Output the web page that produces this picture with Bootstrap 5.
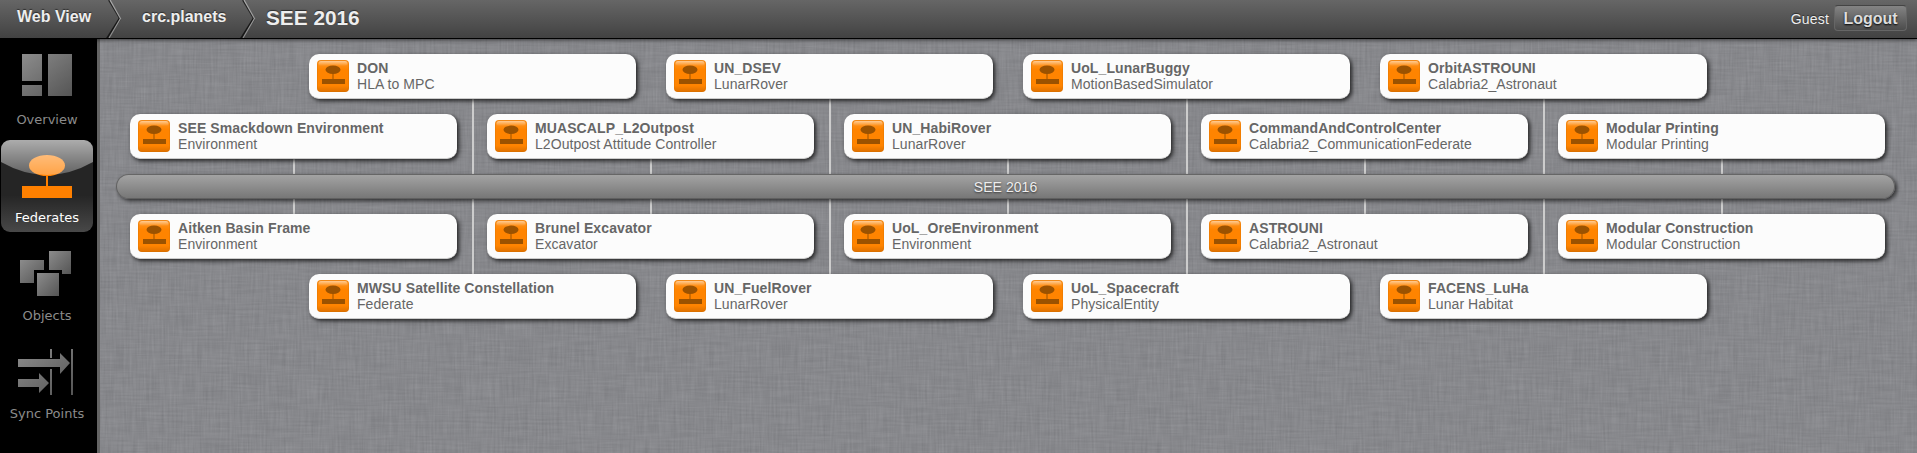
<!DOCTYPE html>
<html lang="en">
<head>
<meta charset="utf-8">
<title>SEE 2016 - Web View</title>
<link href="https://cdn.jsdelivr.net/npm/bootstrap@5.3.0/dist/css/bootstrap.min.css" rel="stylesheet">
<style>
html,body{height:100%}
body{font-family:"Liberation Sans",Arial,sans-serif;font-size:14px;line-height:16px;color:#666;background:#86878b;overflow:hidden}
.topbar{height:39px;background:linear-gradient(#666,#424242);border-bottom:1px solid #000;box-shadow:0 1px 4px rgba(0,0,0,.6);color:#eee;z-index:3;text-shadow:0 -1px 1px rgba(0,0,0,.5)}
.crumb{font-size:16px;font-weight:bold;height:38px;line-height:33px;padding-left:17px;color:#eee}
.crumb-web{width:106px}
.crumb-crc{width:115px;margin-left:19px}
.crumb-now{font-size:20.8px;line-height:35px;padding-left:11px;margin-left:15px}
.chev{width:16px;height:38px;margin-right:-16px;flex:none}
.user{line-height:38px;letter-spacing:.2px}
.logout{width:73px;height:26px;line-height:25px;font-size:16px;font-weight:bold;color:#ddd;border:1px solid #666;border-top-color:#444;border-radius:4px;background:linear-gradient(#848484,#4c4c4c);padding:0;margin:5px 10px 0 5px;text-shadow:0 1px 2px #000}
.side{width:100px;background:#000;border-right:3px solid #646464;font-family:"DejaVu Sans",Verdana,sans-serif;font-size:13px;color:#8b8b8b}
.side-item{width:92px;height:92px;margin:0 0 6px 1px;border-radius:9px;color:inherit;text-decoration:none}
.side-item:first-child{margin-bottom:9px}
.side-item:first-child span{margin-top:3px}
.side-item svg{display:block;width:92px;height:70px}
.side-item span{display:block;width:92px;text-align:center;line-height:16px}
.side-item.current{color:#fff;background:linear-gradient(#252525 60%,#484848)}
.weave{inset:0;width:100%;height:100%}
.board{display:grid;grid-template-columns:repeat(5,179px 178px);grid-template-rows:45px 15px 45px 15px 25px 15px 45px 15px 45px;padding:15px 0 0 30px;letter-spacing:.06px}
.fed{width:327px;height:45px;background:#fcfcfc;border-bottom:1px solid #ccc;border-radius:10px;box-shadow:2px 2px 4px rgba(0,0,0,.75);padding:6px 8px;z-index:1}
.fed svg{width:32px;height:32px;flex:none;margin-right:8px}
.fed b{display:block;letter-spacing:.1px}
.stem{width:2px;background:#ccc;margin-left:163px}
.fom{grid-column:1/-1;grid-row:5;width:1779px;height:25px;margin-left:-14px;border:1px solid #606060;border-top-color:#666;border-radius:13px;background:linear-gradient(#a3a3a3,#777);box-shadow:2px 2px 4px rgba(0,0,0,.65);color:#eee;text-shadow:0 1px 2px #333;line-height:24px;text-align:center;z-index:1}
</style>
</head>
<body class="d-flex flex-column">
<svg width="0" height="0" class="position-absolute">
<defs>
<linearGradient id="grey" x2="1" y2="1"><stop stop-color="#8c8c8c"/><stop offset="1" stop-color="#555"/></linearGradient>
<linearGradient id="gloss" x2="0" y2="1"><stop stop-color="#fff" stop-opacity=".62"/><stop offset="1" stop-color="#fff" stop-opacity=".28"/></linearGradient>
<linearGradient id="tile" x2="0" y2="1"><stop stop-color="#ff9a2a"/><stop offset=".3" stop-color="#ff8400"/><stop offset=".8" stop-color="#ff8400"/><stop offset="1" stop-color="#dc7000"/></linearGradient>
<linearGradient id="shine" x2="0" y2="1"><stop stop-color="#fff" stop-opacity=".5"/><stop offset="1" stop-color="#fff" stop-opacity="0"/></linearGradient>
<linearGradient id="edge" gradientUnits="userSpaceOnUse" x1="0" y1="0" x2="0" y2="38"><stop stop-color="#aaa"/><stop offset="1" stop-color="#888"/></linearGradient>
<symbol id="fedicon" viewBox="0 0 32 32"><rect width="32" height="32" rx="4" fill="url(#tile)"/><rect x=".5" y=".5" width="31" height="31" rx="3.5" fill="none" stroke="#d87000" stroke-opacity=".35"/><rect x="1.5" y="1" width="29" height="5" rx="2.5" fill="url(#shine)"/><g fill="#9b5200"><ellipse cx="16" cy="9.800" rx="7.500" ry="4.200"/><path d="M15.500 13h1v6h-1zM5 19h23v5H5z"/></g></symbol>
<symbol id="chevron" viewBox="0 0 16 38"><path d="M3 0L14 18.500" fill="none" stroke="#222" stroke-width="2"/><path d="M14 18.500L1 39" fill="none" stroke="#161616" stroke-width="2.500"/><path d="M4 0L14.500 18.500L3 38" fill="none" stroke="url(#edge)" stroke-width="1.300"/></symbol>
</defs>
</svg>
<header class="topbar d-flex flex-shrink-0 position-relative">
<div class="crumb crumb-web">Web View</div>
<svg class="chev"><use href="#chevron"/></svg>
<div class="crumb crumb-crc">crc.planets</div>
<svg class="chev"><use href="#chevron"/></svg>
<div class="crumb crumb-now">SEE 2016</div>
<div class="user ms-auto">Guest</div>
<button class="btn logout">Logout</button>
</header>
<div class="d-flex flex-grow-1">
<nav class="side flex-shrink-0">
<a class="side-item d-block" href="#"><svg viewBox="1 39 92 70"><path fill="url(#grey)" d="M22 54h20v27H22zM48 54h24v42H48zM22 85h20v11H22z"/></svg><span>Overview</span></a>
<a class="side-item d-block current overflow-hidden" href="#"><svg viewBox="1 140 92 70"><path d="M46 173h2v15h-2zM22 186h50v12H22z" fill="#ff8000"/><ellipse cx="47" cy="165.500" rx="18" ry="10.500" fill="#ff8000"/><path d="M1 140H93V162Q70 175 47 175Q24 175 1 162Z" fill="url(#gloss)"/></svg><span>Federates</span></a>
<a class="side-item d-block" href="#"><svg viewBox="1 238 92 70"><g fill="url(#grey)"><path d="M20 260h24v10H34v13H20z"/><path d="M49 251h22v23h-9v-4H49z"/><path d="M37 273h22v23H37z"/></g></svg><span>Objects</span></a>
<a class="side-item d-block" href="#"><svg viewBox="1 336 92 70"><path fill="url(#grey)" d="M18 359h42v-6l10 10-10 11v-7H18zM18 379h21v-6l10 10-10 10v-6H18zM50 349h2v9h-2zM50 369h2v26h-2zM71 349h2v46h-2z"/></svg><span>Sync Points</span></a>
</nav>
<main class="flex-grow-1 position-relative">
<svg class="weave position-absolute">
<filter id="warp" x="0" y="0" width="100%" height="100%" color-interpolation-filters="sRGB"><feTurbulence type="fractalNoise" baseFrequency=".03 .5" numOctaves="2" seed="3"/><feColorMatrix values=".13 0 0 0 .467 .13 0 0 0 .47 .13 0 0 0 .486 0 0 0 0 1"/></filter>
<filter id="weft" x="0" y="0" width="100%" height="100%" color-interpolation-filters="sRGB"><feTurbulence type="fractalNoise" baseFrequency=".5 .03" numOctaves="2" seed="8"/><feColorMatrix values=".13 0 0 0 .467 .13 0 0 0 .47 .13 0 0 0 .486 0 0 0 0 1"/></filter>
<rect width="100%" height="100%" filter="url(#warp)"/><rect width="100%" height="100%" filter="url(#weft)" opacity=".5"/>
</svg>
<div class="board position-relative" id="board"><div class="fom">SEE 2016</div></div>
</main>
</div>
<script src="https://cdn.jsdelivr.net/npm/bootstrap@5.3.0/dist/js/bootstrap.bundle.min.js"></script>
<script>
// grid row of the cards, first column, grid rows crossed by the stem, then the federates
const rows = [
  [1, 2, '2 / 5', [['DON','HLA to MPC'],['UN_DSEV','LunarRover'],['UoL_LunarBuggy','MotionBasedSimulator'],['OrbitASTROUNI','Calabria2_Astronaut']]],
  [3, 1, '4 / 5', [['SEE Smackdown Environment','Environment'],['MUASCALP_L2Outpost','L2Outpost Attitude Controller'],['UN_HabiRover','LunarRover'],['CommandAndControlCenter','Calabria2_CommunicationFederate'],['Modular Printing','Modular Printing']]],
  [7, 1, '6 / 7', [['Aitken Basin Frame','Environment'],['Brunel Excavator','Excavator'],['UoL_OreEnvironment','Environment'],['ASTROUNI','Calabria2_Astronaut'],['Modular Construction','Modular Construction']]],
  [9, 2, '6 / 9', [['MWSU Satellite Constellation','Federate'],['UN_FuelRover','LunarRover'],['UoL_Spacecraft','PhysicalEntity'],['FACENS_LuHa','Lunar Habitat']]]
];
document.getElementById('board').insertAdjacentHTML('beforeend', rows.map(([row, col, span, feds]) =>
  feds.map(([name, type], i) => {
    const c = col + i * 2;
    return `<div class="stem" style="grid-column:${c};grid-row:${span}"></div>
      <div class="fed d-flex" style="grid-column:${c};grid-row:${row}"><svg><use href="#fedicon"/></svg><div class="text-nowrap"><b>${name}</b>${type}</div></div>`;
  }).join('')).join(''));
</script>
</body>
</html>
